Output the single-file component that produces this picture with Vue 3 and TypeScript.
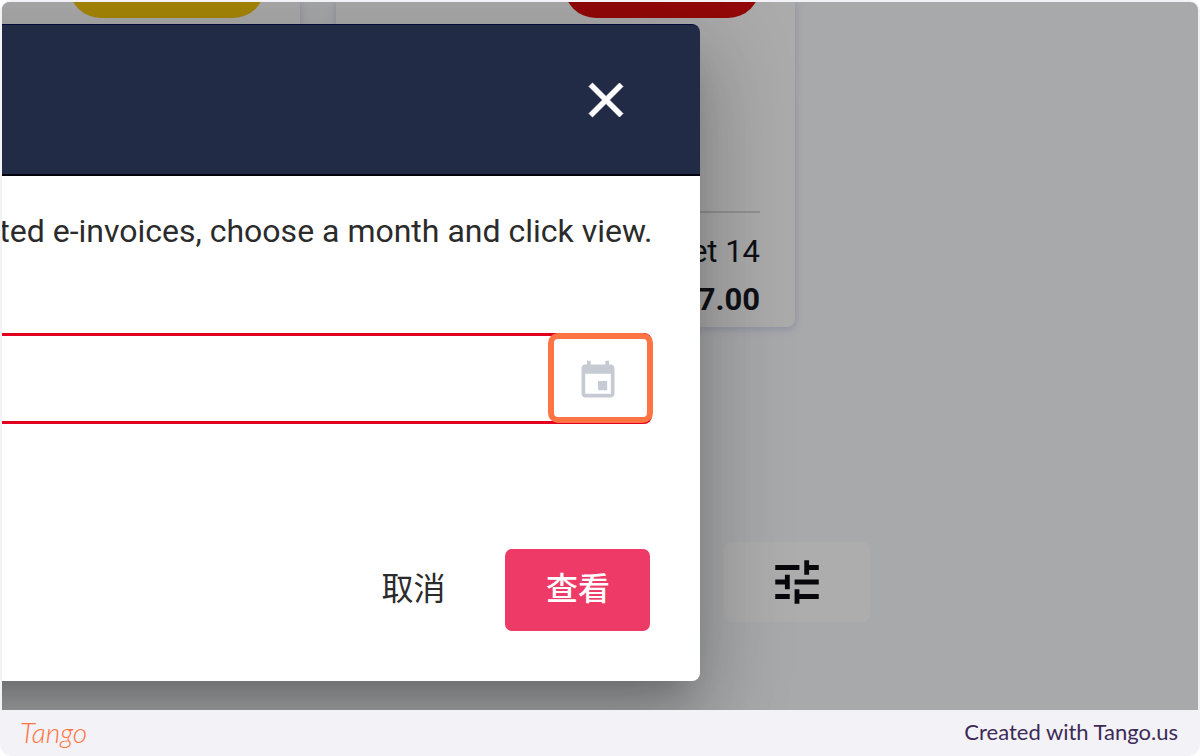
<script setup lang="ts">
import { ref } from 'vue'

interface Card {
  tone: 'yellow' | 'red'
  label: string
  amount: string
}

const cards: Card[] = [
  { tone: 'yellow', label: '', amount: '' },
  { tone: 'red', label: 'et 14', amount: '7.00' },
]

const month = ref('')
const open = ref(true)
const close = () => {
  open.value = false
}
</script>

<template>
  <div class="frame">
    <main class="stage">
      <div class="page">
        <div class="cards">
          <article v-for="card in cards" :key="card.tone" class="card">
            <span class="pill" :class="card.tone"></span>
            <div class="totals">
              <span class="label">{{ card.label }}</span>
              <strong class="amount">{{ card.amount }}</strong>
            </div>
          </article>
        </div>
        <button class="tune" type="button" aria-label="Filters">
          <svg viewBox="0 0 24 24" aria-hidden="true">
            <path d="M3 17v2h6v-2H3zM3 5v2h10V5H3zm10 16v-2h8v-2h-8v-2h-2v6h2zM7 9v2H3v2h4v2h2V9H7zm14 4v-2H11v2h10zm-6-4h2V7h4V5h-4V3h-2v6z" />
          </svg>
        </button>
      </div>

      <section v-if="open" class="dialog" role="dialog" aria-modal="true">
        <header class="dialog-head">
          <button class="close" type="button" aria-label="Close" @click="close">
            <svg viewBox="0 0 24 24" aria-hidden="true">
              <path d="M19 6.41 17.59 5 12 10.59 6.41 5 5 6.41 10.59 12 5 17.59 6.41 19 12 13.41 17.59 19 19 17.59 13.41 12z" />
            </svg>
          </button>
        </header>
        <div class="dialog-body">
          <p id="hint" class="hint">ted e-invoices, choose a month and click view.</p>
          <div class="field">
            <input v-model="month" type="text" aria-labelledby="hint" />
            <button class="pick" type="button" aria-label="Choose month">
              <svg viewBox="0 0 24 24" aria-hidden="true">
                <path d="M17 12h-5v5h5v-5zM16 1v2H8V1H6v2H5c-1.11 0-1.99.9-1.99 2L3 19c0 1.1.89 2 2 2h14c1.1 0 2-.9 2-2V5c0-1.1-.9-2-2-2h-1V1h-2zm3 18H5V8h14v11z" />
              </svg>
            </button>
          </div>
          <div class="actions">
            <button class="cancel" type="button" @click="close">取消</button>
            <button class="view" type="button">查看</button>
          </div>
        </div>
      </section>
    </main>

    <footer class="credit">
      <span class="brand">Tango</span>
      <span>Created with Tango.us</span>
    </footer>
  </div>
</template>

<style>
body {
  margin: 0;
  background: #fff;
}
</style>

<style scoped>
.frame {
  box-sizing: border-box;
  min-height: 100vh;
  padding: 2px 2px 0;
  display: flex;
  flex-direction: column;
  border-radius: 12px;
  background: #f3f2f7;
  font-family: Roboto, 'Noto Sans CJK SC', sans-serif;
}

button {
  font: inherit;
  margin: 0;
  padding: 0;
  border: 0;
  background: none;
  display: flex;
  align-items: center;
  justify-content: center;
}

svg {
  display: block;
  fill: currentColor;
}

.stage {
  position: relative;
  flex: 1;
  overflow: hidden;
  border-radius: 8px 8px 0 0;
  background: #a8a9ab;
}

.cards {
  display: grid;
  grid-template-columns: 298fr 459fr 367fr;
  gap: 36px;
}

.card {
  box-sizing: border-box;
  height: 325px;
  padding: 0 35px 3px;
  display: flex;
  flex-direction: column;
  justify-content: space-between;
  align-items: flex-end;
  overflow: hidden;
  border-radius: 0 0 8px 8px;
  background: #ababab;
  box-shadow: 0 2px 6px 1px rgba(125, 130, 155, 0.5);
}

.pill {
  width: 196px;
  height: 64px;
  margin-top: -48px;
  border-radius: 32px;
}

.pill.yellow {
  background: #a78608;
}

.pill.red {
  background: #940808;
}

.totals {
  width: 100%;
  display: flex;
  flex-direction: column;
  align-items: flex-end;
  padding-top: 15px;
  border-top: 2px solid #929292;
  color: #101116;
  font-size: 31px;
  line-height: 48px;
}

.label,
.amount {
  min-height: 48px;
}

.tune {
  margin-top: 215px;
  margin-left: 60.4%;
  width: 146px;
  height: 80px;
  border-radius: 8px;
  background: #adadad;
  color: #08080c;
}

.tune svg {
  width: 58px;
  height: 58px;
}

.dialog {
  position: absolute;
  top: 22px;
  left: -160px;
  right: 41.6%;
  border-radius: 8px;
  background: #fff;
  color: #2b2b2b;
  box-shadow:
    0 22px 30px -14px rgba(0, 0, 0, 0.2),
    0 48px 76px 6px rgba(0, 0, 0, 0.14),
    0 18px 92px 16px rgba(0, 0, 0, 0.12);
}

.dialog-head {
  height: 149px;
  padding-right: 65px;
  display: flex;
  align-items: center;
  justify-content: flex-end;
  border-top: 1px solid #030a3c;
  border-bottom: 2px solid #02030c;
  border-radius: 8px 8px 0 0;
  background: #212b46;
}

.close {
  color: #fff;
}

.close svg {
  width: 58px;
  height: 58px;
  stroke: currentColor;
  stroke-width: 0.4;
}

.dialog-body {
  padding: 35px 48px 50px 0;
}

.hint {
  margin: 0;
  display: flex;
  justify-content: flex-end;
  font-size: 32px;
  line-height: 40px;
  white-space: nowrap;
}

.field {
  position: relative;
  box-sizing: border-box;
  height: 91px;
  margin-top: 82px;
  border: 3px solid #e3001f;
  border-radius: 8px;
}

.field input {
  box-sizing: border-box;
  width: 100%;
  height: 100%;
  padding: 0 120px 0 180px;
  border: 0;
  outline: 0;
  background: transparent;
  font: inherit;
  font-size: 32px;
}

.pick {
  position: absolute;
  top: -3px;
  right: -4px;
  box-sizing: border-box;
  width: 105px;
  height: 90px;
  padding: 6px 6px 0 0;
  border: 6px solid #ff7442;
  border-radius: 10px;
  background: #fff;
  color: #c5cad3;
}

.pick svg {
  width: 44px;
  height: 44px;
}

.actions {
  display: flex;
  justify-content: flex-end;
  gap: 60px;
  margin-top: 125px;
  padding-right: 2px;
  font-size: 32px;
  line-height: 48px;
}

.cancel,
.view {
  padding-bottom: 2px;
}

.cancel {
  color: #2b2b2b;
}

.view {
  box-sizing: border-box;
  width: 145px;
  height: 82px;
  border-radius: 7px;
  background: #ee3a66;
  color: #fff;
  font-weight: 500;
}

.credit {
  box-sizing: border-box;
  height: 46px;
  padding: 0 20px 3px 18px;
  display: flex;
  align-items: center;
  justify-content: space-between;
  color: #3d2a56;
  font-family: Lato, sans-serif;
  font-size: 22px;
}

.brand {
  color: #ff7442;
  font-size: 28px;
  font-style: italic;
  font-weight: 300;
}
</style>
